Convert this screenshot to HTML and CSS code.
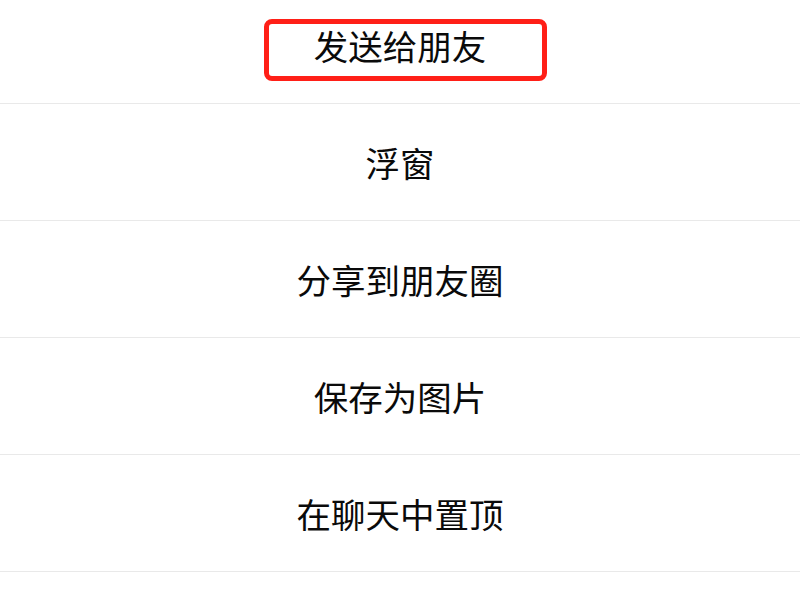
FILE: index.html
```html
<!DOCTYPE html>
<html lang="zh-CN">
<head>
  <meta charset="UTF-8" />
  <meta name="viewport" content="width=device-width, initial-scale=1.0" />
  <title>菜单</title>
  <link rel="stylesheet" href="styles.css">
</head>
<body>
  <ul class="menu">
    <li class="menu-item highlighted">
      <span>发送给朋友</span>
      <div class="mark"></div>
    </li>
    <li class="menu-item"><span>浮窗</span></li>
    <li class="menu-item"><span>分享到朋友圈</span></li>
    <li class="menu-item"><span>保存为图片</span></li>
    <li class="menu-item"><span>在聊天中置顶</span></li>
    <li class="menu-item empty"></li>
  </ul>
</body>
</html>
```

FILE: styles.css
```css
* {
  margin: 0;
  padding: 0;
  box-sizing: border-box;
}

body {
  background: #ffffff;
  font-family: "Noto Sans CJK SC", "Noto Sans", sans-serif;
  color: #0a0a0a;
  overflow: hidden;
}

.menu {
  list-style: none;
  margin-top: -13px;
}

.menu-item {
  position: relative;
  height: 117px;
  border-bottom: 1px solid #e9e9e9;
  display: flex;
  align-items: center;
  justify-content: center;
  font-size: 34.5px;
  line-height: 1;
}

/* red annotation box around the first item */
.mark {
  position: absolute;
  left: 264px;
  top: 32px;
  width: 283px;
  height: 62px;
  border: 5px solid #ff1f17;
  border-radius: 8px;
}
```
